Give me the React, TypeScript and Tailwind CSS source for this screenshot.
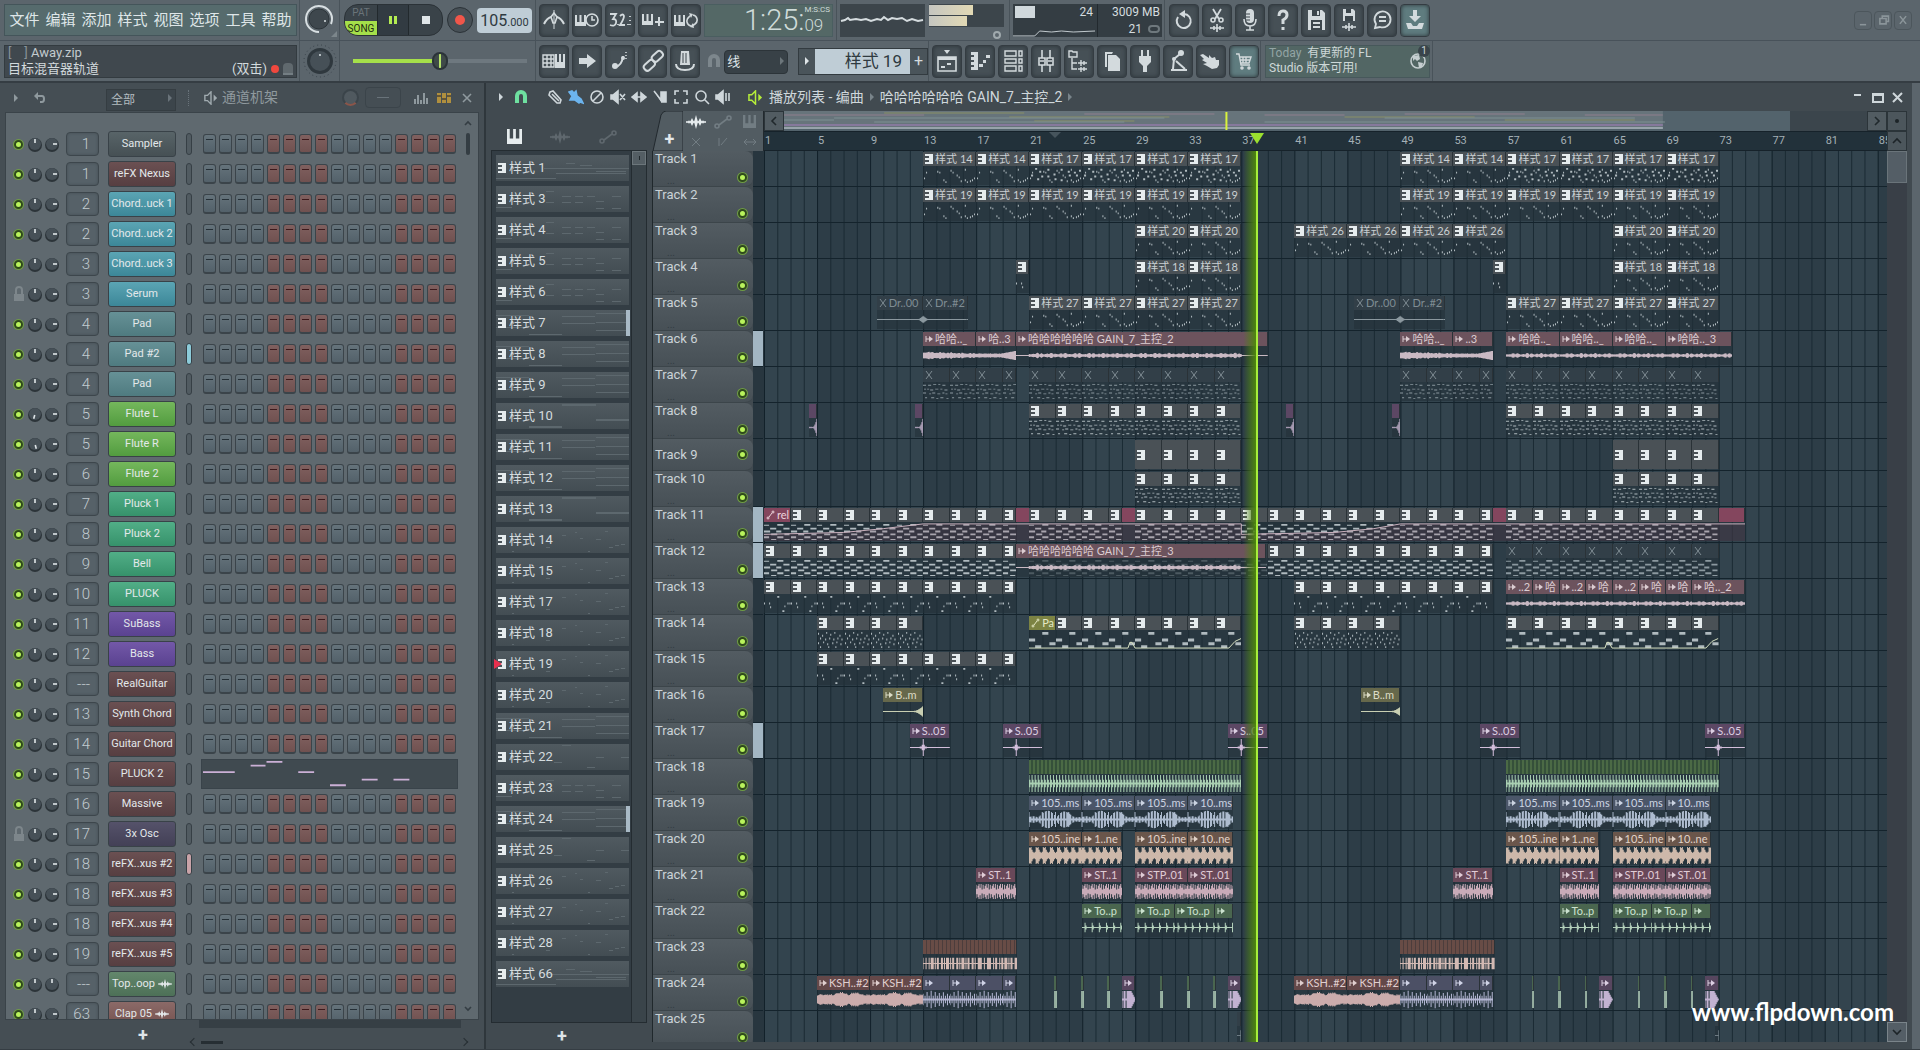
import { ReactNode } from "react";
import clsx from "clsx";

type Tone =
  | "gray" | "muted" | "pink" | "purple" | "red" | "olive" | "lime" | "blue" | "brown"
  | "plum" | "green" | "maroon" | "slate" | "violet" | "stripeGreen" | "stripeRust" | "none";

type ClipIcon = "pattern" | "wave" | "curve" | "cross";

type Clip = {
  at: number;
  len: number;
  tone: Tone;
  icon?: ClipIcon;
  label?: string;
  body?: string;
  tall?: boolean;
};

type Channel = { num: string; name: string; color: string; locked?: boolean; selected?: string; sample?: boolean };

const BARS = 84.7;
const BAR_UNITS = 13;

const toneHeader: Record<Tone, string> = {
  gray: "bg-[#4a5156] text-[#c9cfd2]",
  muted: "bg-[#323f48] text-[#7f8c93]",
  pink: "bg-[#6c535d] text-[#dccdd2]",
  purple: "bg-[#5c4764] text-[#dccfe2]",
  red: "bg-[#84465e] text-[#ecd5dd]",
  olive: "bg-[#66684b] text-[#dcdcc6]",
  lime: "bg-[#7c8343] text-[#e4e8c4]",
  blue: "bg-[#4b5669] text-[#ccd4e2]",
  brown: "bg-[#6a564b] text-[#e2d3c8]",
  plum: "bg-[#694859] text-[#e0ccd6]",
  green: "bg-[#4a664f] text-[#cce2cf]",
  maroon: "bg-[#644849] text-[#e0cfcf]",
  slate: "bg-[#4c5065] text-[#d0d3e6]",
  violet: "bg-[#57465f] text-[#dccfe2]",
  stripeGreen: "bg-[repeating-linear-gradient(90deg,#4b6a45_0_2px,#35503a_2px_4px)]",
  stripeRust: "bg-[repeating-linear-gradient(90deg,#684c46_0_3px,#4c3d3c_3px_4px)]",
  none: "bg-transparent",
};

const toneInk: Record<Tone, string> = {
  gray: "#b0babf",
  muted: "#8b989f",
  pink: "#c9b9c3",
  purple: "#d3bedb",
  red: "#c9a5b6",
  olive: "#c9cfb2",
  lime: "#cfd8a0",
  blue: "#aebccf",
  brown: "#cdb8aa",
  plum: "#c9abb8",
  green: "#b3d0bb",
  maroon: "#cbacac",
  slate: "#b3b6d2",
  violet: "#c3b3d2",
  stripeGreen: "#a9cfb2",
  stripeRust: "#d2b9b3",
  none: "#cfd8a0",
};

// Note cells: [x, y, width, height], tiled over the clip.
type Cell = { period: number; notes: number[][] };

const scatter = [
  [1, 12], [3, 6], [14, 5], [16, 6], [20, 14], [22, 16], [27, 4], [29, 6], [33, 9], [35, 11],
  [37, 15], [41, 3], [41, 14], [43, 16], [46, 15], [48, 14], [50, 12],
].map(([x, y]) => [x, y, 1, 2]);

const cells: Record<string, Cell> = {
  dots: { period: 52, notes: scatter },
  dense: {
    period: 52,
    notes: [
      ...scatter,
      ...[[2, 9], [6, 2], [8, 13], [10, 5], [12, 10], [18, 3], [18, 10], [24, 8], [25, 13], [31, 3], [31, 14], [38, 5], [39, 9], [44, 6], [46, 9], [49, 4]].map(([x, y]) => [x, y, 2, 2]),
    ],
  },
  keys: {
    period: 26,
    notes: [
      [0, 3, 3, 1], [5, 3, 3, 1], [10, 2, 3, 1], [15, 2, 2, 1], [19, 3, 3, 1], [1, 7, 2, 1], [4, 7, 2, 1], [7, 8, 3, 1],
      [12, 7, 3, 1], [17, 7, 2, 1], [21, 8, 3, 1], [0, 11, 3, 1], [6, 12, 2, 1], [9, 11, 3, 1], [14, 12, 3, 1], [19, 11, 2, 1],
      [22, 12, 2, 1], [2, 16, 2, 1], [8, 16, 3, 1], [13, 17, 2, 1], [17, 16, 3, 1], [23, 17, 2, 1],
    ],
  },
  dash: {
    period: 26,
    notes: [
      [0, 3, 5, 1], [13, 2, 6, 2], [6, 6, 6, 2], [19, 6, 6, 2], [0, 9, 6, 2], [12, 9, 5, 2], [7, 12, 6, 2], [20, 12, 5, 2],
      [0, 15, 5, 2], [13, 15, 6, 2], [7, 18, 5, 1], [20, 18, 5, 1],
    ],
  },
  sparse: {
    period: 26,
    notes: [[0, 9, 1, 2], [5, 9, 1, 2], [6, 13, 1, 2], [13, 2, 2, 2], [18, 17, 2, 2], [20, 12, 1, 2], [23, 9, 1, 2], [25, 9, 1, 2]],
  },
  noise: {
    period: 26,
    notes: [
      [1, 3], [5, 5], [9, 2], [13, 4], [17, 2], [22, 5], [3, 8], [8, 9], [12, 8], [16, 9], [20, 8], [24, 9], [1, 13], [6, 12],
      [10, 14], [15, 13], [19, 12], [23, 14], [3, 17], [11, 17], [18, 17],
    ].map(([x, y]) => [x, y, 1, 2]),
  },
  bass: { period: 26, notes: [[0, 9, 6, 3], [6, 16, 6, 3], [13, 2, 6, 3], [20, 13, 6, 3]] },
};

function notesPath(cell: Cell, width: number) {
  let d = "";
  for (let base = 0; base < width; base += cell.period) {
    for (const [x, y, w, h] of cell.notes) {
      if (base + x + w > width) continue;
      d += `M${base + x} ${y}h${w}v${h}h${-w}z`;
    }
  }
  return d;
}

const wobble = (x: number) => Math.abs(Math.sin(x * 1.7) * Math.cos(x * 0.61 + 1));

const waves: Record<string, (x: number, w: number) => number> = {
  flatEnd: (x, w) => (w - x < 5 ? (5 - (w - x)) * 0.8 : 0.5),
  flatStart: (x) => (x < 5 ? (5 - x) * 0.8 : 0.5),
  vox: (x, w) => (x < 13 || w - x < 26 ? 0.5 : 1.2 + wobble(x * 0.4) * 1.6),
  voxFull: (x) => 1 + wobble(x * 0.4) * 1.6,
  fade: (x, w) => 3 + wobble(x * 0.5) * 1.2 - (x / w) * 1.5,
  swell: (x, w) => (x / w < 0.6 ? 1.8 + wobble(x) * 0.5 : 1.8 + ((x / w - 0.6) / 0.4) * 3),
  kick: (x) => (x % 3 === 0 ? 9 : x % 3 === 1 ? 4 : 1),
  shaker: (x) => (x % 13 === 0 ? 8 : x % 3 === 0 ? 1 : 2 + wobble(x * 0.1 + 1) * 8),
  strum: (x) => [9, 8, 9, 6, 4, 3, 4][x % 7],
  stomp: (x) => [7, 3, 6, 8, 4, 8, 2][x % 7],
  ticks: (x) => (x % 7 === 3 ? 5 : x % 7 === 4 ? 2 : 0.5),
  clap: (x) => (x % 3 === 0 ? 6 : wobble(x) > 0.5 ? 6 : 0.5),
  ksh: (x) => 4 + wobble(x * 0.12) * 3 + wobble(x) * 1.5,
  hat: (x) => (x % 4 === 0 ? 6 + wobble(x) * 4 : x % 4 === 2 ? 4 : 1),
  riser: (x, w) => (x / w < 0.75 ? 0.5 : 0.5 + ((x / w - 0.75) / 0.25) ** 2 * 5),
  hit: (x, w) => {
    const away = Math.abs(x - Math.round(w * 0.33));
    return away === 0 ? 9 : away === 1 ? 3 : away < 4 ? 1 : 0.5;
  },
  tail: (x, w) => (x / w < 0.4 ? 0.7 : ((x / w - 0.4) / 0.6) ** 2 * 9),
  stack: (x) => (x < 7 ? (x % 3 === 1 ? 1 : 9) : x < 10 ? 9 : 9 - (x - 9) * 2),
  sliver: () => 9,
};

function wavePath(amp: (x: number, w: number) => number, width: number) {
  let d = "";
  for (let x = 0; x <= width; x += 1) {
    const h = Math.max(amp(x, width), 0.5);
    d += `M${x} ${10 - h}V${10 + h}`;
  }
  return d;
}

function twice(list: Clip[], shift = 36): Clip[] {
  return [...list, ...list.map((clip) => ({ ...clip, at: clip.at + shift }))];
}

function patterns(from: number, to: number, step: number, body: string, label?: string, tone: Tone = "gray"): Clip[] {
  const list: Clip[] = [];
  for (let at = from; at < to; at += step) {
    list.push({ at, len: Math.min(step, to - at), tone, icon: tone === "muted" ? "cross" : "pattern", label, body });
  }
  return list;
}

const wav = (at: number, len: number, tone: Tone, label: string, body: string): Clip => ({ at, len, tone, icon: "wave", label, body });

const slivers = [22.9, 24.9, 26.9, 30.9, 32.9, 34.9].map((at): Clip => ({ at, len: 0.2, tone: "green", body: "sliver" }));

const lanes: Clip[][] = [
  twice([...patterns(13, 21, 4, "dots", "样式 14"), ...patterns(21, 37, 4, "dense", "样式 17")]),
  twice(patterns(13, 37, 4, "dots", "样式 19")),
  [...twice(patterns(29, 37, 4, "dots", "样式 20")), ...patterns(41, 57, 4, "dots", "样式 26")],
  twice([...patterns(20, 21, 1, "sparse"), ...patterns(29, 37, 4, "dots", "样式 18")]),
  twice([
    { at: 9.5, len: 3.5, tone: "muted", icon: "cross", label: "Dr..00", body: "flatEnd" },
    { at: 13, len: 3.4, tone: "muted", icon: "cross", label: "Dr..#2", body: "flatStart" },
    ...patterns(21, 37, 4, "dots", "样式 27"),
  ]),
  [
    wav(13, 4, "pink", "哈哈.._", "fade"),
    wav(17, 3, "pink", "哈..3", "swell"),
    wav(20, 19, "pink", "哈哈哈哈哈哈 GAIN_7_主控_2", "vox"),
    wav(49, 4, "pink", "哈哈.._", "fade"),
    wav(53, 3, "pink", "..3", "swell"),
    wav(57, 4, "pink", "哈哈.._", "voxFull"),
    wav(61, 4, "pink", "哈哈.._", "voxFull"),
    wav(65, 4, "pink", "哈哈.._", "voxFull"),
    wav(69, 5, "pink", "哈哈.._3", "voxFull"),
  ],
  twice([...patterns(13, 20, 2, "keys", "", "muted"), ...patterns(21, 37, 2, "keys", "", "muted")]),
  twice([
    { at: 4.4, len: 0.6, tone: "purple", body: "tail" },
    { at: 12.4, len: 0.6, tone: "purple", body: "tail" },
    ...patterns(21, 37, 2, "keys"),
  ]),
  twice(patterns(29, 37, 2, "").map((clip) => ({ ...clip, tall: true }))),
  twice(patterns(29, 37, 2, "keys")),
  [
    { at: 1, len: 74, tone: "red" },
    ...patterns(1, 20, 2, "dash"),
    ...patterns(21, 28, 2, "dash"),
    ...patterns(29, 37, 2, "dash"),
    ...patterns(37, 56, 2, "dash"),
    ...patterns(57, 73, 2, "dash"),
    { at: 1, len: 74, tone: "none", body: "sweep" },
    { at: 1, len: 2, tone: "red", icon: "curve", label: "rel" },
  ],
  [
    ...patterns(1, 20, 2, "dash"),
    ...patterns(21, 39, 2, "dash", "", "muted"),
    ...patterns(39, 56, 2, "dash"),
    ...patterns(57, 73, 2, "dash", "", "muted"),
    wav(20, 18.9, "pink", "哈哈哈哈哈哈 GAIN_7_主控_3", "vox"),
  ],
  [
    ...patterns(1, 20, 2, "sparse"),
    ...patterns(41, 56, 2, "sparse"),
    ...["..2", "哈", "..2", "哈", "..2", "哈", "哈"].map((label, i) => wav(57 + i * 2, 2, "pink", label, "voxFull")),
    wav(71, 4, "pink", "哈.._2", "voxFull"),
  ],
  [
    ...twice([...patterns(5, 13, 2, "noise"), ...patterns(21, 37, 2, "bass")]),
    ...twice([{ at: 21, len: 16, tone: "none", body: "panline" }]),
    { at: 21, len: 2, tone: "lime", icon: "curve", label: "Pa" },
  ],
  patterns(5, 20, 2, "sparse"),
  twice([wav(10, 3, "olive", "B..m", "riser")]),
  [12, 19, 36, 55, 72].map((at) => wav(at, 3, "purple", "S..05", "hit")),
  twice([{ at: 21, len: 16, tone: "stripeGreen", body: "kick" }]),
  twice([
    wav(21, 4, "blue", "105..ms", "shaker"),
    wav(25, 4, "blue", "105..ms", "shaker"),
    wav(29, 4, "blue", "105..ms", "shaker"),
    wav(33, 3.4, "blue", "10..ms", "shaker"),
  ]),
  twice([
    wav(21, 4, "brown", "105..ine", "strum"),
    wav(25, 3, "brown", "1..ne", "strum"),
    wav(29, 4, "brown", "105..ine", "strum"),
    wav(33, 3.4, "brown", "10..ne", "strum"),
  ]),
  twice([
    wav(17, 3, "plum", "ST..1", "stomp"),
    wav(25, 3, "plum", "ST..1", "stomp"),
    wav(29, 4, "plum", "STP..01", "stomp"),
    wav(33, 3.4, "plum", "ST..01", "stomp"),
  ]),
  twice([
    wav(25, 3, "green", "To..p", "ticks"),
    wav(29, 3, "green", "To..p", "ticks"),
    wav(32, 3, "green", "To..p", "ticks"),
    wav(35, 1.4, "green", "", "ticks"),
  ]),
  twice([{ at: 13, len: 7.1, tone: "stripeRust", body: "clap" }]),
  twice([
    wav(5, 4, "maroon", "KSH..#2", "ksh"),
    wav(9, 4, "maroon", "KSH..#2", "ksh"),
    wav(13, 2, "slate", "", "hat"),
    wav(15, 2, "slate", "", "hat"),
    wav(17, 2, "slate", "", "hat"),
    wav(19, 1, "slate", "", "hat"),
    ...slivers,
    wav(28, 1, "violet", "", "stack"),
    wav(36, 1, "violet", "", "stack"),
  ]),
  twice([{ at: 36.7, len: 0.3, tone: "muted", body: "riser" }]),
];

const litTracks = [6, 11, 12, 17];

const maroon = "from-[#6b5052] to-[#563e41]";
const cyan = "from-[#5ba5b4] to-[#3c8798]";
const teal = "from-[#669196] to-[#4f7b80]";
const lime = "from-[#74b75c] to-[#529c3f]";
const jade = "from-[#51ae87] to-[#36926b]";
const grape = "from-[#7358a8] to-[#5a4290]";

const channels: Channel[] = [
  { num: "1", name: "Sampler", color: "from-[#586468] to-[#465054]" },
  { num: "1", name: "reFX Nexus", color: maroon },
  { num: "2", name: "Chord..uck 1", color: cyan },
  { num: "2", name: "Chord..uck 2", color: cyan },
  { num: "3", name: "Chord..uck 3", color: cyan },
  { num: "3", name: "Serum", color: cyan, locked: true },
  { num: "4", name: "Pad", color: teal },
  { num: "4", name: "Pad #2", color: teal, selected: "bg-[#8ccbd9]" },
  { num: "4", name: "Pad", color: teal },
  { num: "5", name: "Flute L", color: lime },
  { num: "5", name: "Flute R", color: lime },
  { num: "6", name: "Flute 2", color: lime },
  { num: "7", name: "Pluck 1", color: jade },
  { num: "8", name: "Pluck 2", color: jade },
  { num: "9", name: "Bell", color: jade },
  { num: "10", name: "PLUCK", color: jade },
  { num: "11", name: "SuBass", color: grape },
  { num: "12", name: "Bass", color: grape },
  { num: "---", name: "RealGuitar", color: maroon },
  { num: "13", name: "Synth Chord", color: maroon },
  { num: "14", name: "Guitar Chord", color: maroon },
  { num: "15", name: "PLUCK 2", color: maroon },
  { num: "16", name: "Massive", color: maroon },
  { num: "17", name: "3x Osc", color: "from-[#55526a] to-[#434056]", locked: true },
  { num: "18", name: "reFX..xus #2", color: maroon, selected: "bg-[#c9a3a8]" },
  { num: "18", name: "reFX..xus #3", color: maroon },
  { num: "18", name: "reFX..xus #4", color: maroon },
  { num: "19", name: "reFX..xus #5", color: maroon },
  { num: "---", name: "Top..oop", color: "from-[#63876c] to-[#4d7057]", sample: true },
  { num: "63", name: "Clap 05", color: "from-[#8b6a68] to-[#75524f]", sample: true },
];

const pickerItems = [1, 3, 4, 5, 6, 7, 8, 9, 10, 11, 12, 13, 14, 15, 17, 18, 19, 20, 21, 22, 23, 24, 25, 26, 27, 28, 66];
const menus = ["文件", "编辑", "添加", "样式", "视图", "选项", "工具", "帮助"];

function Icon({ children, className = "size-6", box = "0 0 24 24" }: { children: ReactNode; className?: string; box?: string }) {
  return (
    <svg viewBox={box} className={clsx("shrink-0", className)} fill="none" stroke="currentColor" strokeWidth="1.6" aria-hidden="true">
      {children}
    </svg>
  );
}

const pianoPath = "M0 0h2v7h2.5V0h2v7H9V0h2v11H0z";
const solid = { fill: "currentColor", stroke: "none" };

const icons = {
  metronome: (
    <Icon>
      <path d="M12 2v19" strokeWidth="1" />
      <path d="M12 5l-3 4 2 6h2l2-6z" />
      <path d="M2 16q3-6 7-7M22 16q-3-6-7-7" strokeWidth="2" />
    </Icon>
  ),
  pianoClock: (
    <Icon>
      <path d={pianoPath} transform="translate(0 7)" {...solid} />
      <circle cx="17" cy="12" r="6" />
      <path d="M17 8v4h3" />
    </Icon>
  ),
  countdown: (
    <Icon>
      <path d="M2 6h6l-3 5q4 0 3 4t-6 2M12 8q3-3 4 0 0 3-4 9h5M10 16v1M20 16v1M22 8v1M22 12v1M22 16v1" strokeWidth="1.8" />
    </Icon>
  ),
  pianoPlus: (
    <Icon>
      <path d={pianoPath} transform="translate(1 6)" {...solid} />
      <path d="M18 9v9M14 14h9" strokeWidth="2" />
    </Icon>
  ),
  pianoLoop: (
    <Icon>
      <path d={pianoPath} transform="translate(0 7)" {...solid} />
      <path d="M17 18a5 5 0 0 1-2-9l2-2M19 7a5 5 0 0 1 2 9l-3 2" />
      <path d="M15 5l4 1-2 4zM20 20l-4-1 3-4z" {...solid} />
    </Icon>
  ),
  typing: (
    <Icon>
      <path d="M1 6h11v12H1zM1 10h11M1 14h11M5 6v12M9 6v12" strokeWidth="1.4" />
      <path d="M13 5h2v8h2V5h2v8h2V5h2v14H13z" {...solid} />
    </Icon>
  ),
  arrow: (
    <Icon>
      <path d="M4 9h8V5l9 7-9 7v-4H4z" {...solid} />
    </Icon>
  ),
  slide: (
    <Icon>
      <path d="M7 18q7-1 8-11" strokeWidth="2" />
      <circle cx="7" cy="17" r="3" {...solid} />
      <circle cx="15" cy="9" r="2" {...solid} />
      <path d="M18 3v9" strokeDasharray="1 2" />
    </Icon>
  ),
  link: (
    <Icon>
      <rect x="10" y="4" width="12" height="7" rx="3" transform="rotate(-42 16 7)" strokeWidth="2" />
      <rect x="2" y="13" width="12" height="7" rx="3" transform="rotate(-42 8 16)" strokeWidth="2" />
    </Icon>
  ),
  knobPost: (
    <Icon>
      <path d="M8 2h8l1 14H7z" {...solid} />
      <path d="M3 15q0 6 9 6t9-6" strokeWidth="2" />
      <path d="M10 4v10M13 4v10" stroke="#3c464c" strokeWidth="1" />
    </Icon>
  ),
  undo: (
    <Icon>
      <path d="M12 6a7 7 0 1 1-6 3" strokeWidth="2" />
      <path d="M7 6l6-4v8z" {...solid} />
    </Icon>
  ),
  cut: (
    <Icon>
      <path d="M8 1l6 10M16 1l-6 10" strokeWidth="1.8" />
      <circle cx="8" cy="12" r="2" />
      <circle cx="16" cy="12" r="2" />
      <path d="M5 20h14M9 18v4M12 16v8M15 18v4" />
    </Icon>
  ),
  mic: (
    <Icon>
      <rect x="8" y="1" width="8" height="14" rx="4" {...solid} />
      <path d="M6 11q0 7 6 7t6-7M12 18v4M8 22h8" />
      <path d="M8 6h4M8 9h4M8 12h4" stroke="#3c464c" strokeWidth="1" />
    </Icon>
  ),
  help: (
    <Icon>
      <path d="M8 8q0-5 4-5t4 4q0 3-4 5v4M12 19v3" strokeWidth="3" />
    </Icon>
  ),
  save: (
    <Icon>
      <path d="M4 2h14l3 3v17H4z" {...solid} />
      <path d="M8 2h8v6H8zM7 12h11v10H7z" fill="#3c464c" stroke="none" />
      <path d="M13 3h2v4h-2zM9 14h7v2H9zM9 18h7v2H9z" {...solid} />
    </Icon>
  ),
  saveWave: (
    <Icon>
      <path d="M6 1h10l2 2v10H6z" {...solid} />
      <path d="M9 1h5v4H9zM8 8h8v5H8z" fill="#3c464c" stroke="none" />
      <path d="M5 19h14M9 17v4M12 15v8M15 17v4" />
    </Icon>
  ),
  chat: (
    <Icon>
      <path d="M5 20l1-4a8 8 0 1 1 4 3z" strokeWidth="1.8" />
      <path d="M9 9h7M9 13h7" strokeWidth="1.8" />
    </Icon>
  ),
  download: (
    <Icon>
      <path d="M10 2h4v6h4l-6 6-6-6h4zM3 15h5l2 3h4l2-3h5l-2 6H5z" {...solid} />
    </Icon>
  ),
  playlist: (
    <Icon>
      <path d="M9 1h6l-3 4z" {...solid} />
      <path d="M3 8h18v14H3z" />
      <path d="M3 8h18v3H3zM6 17h4v2H6zM12 14h4v2h-4z" {...solid} />
    </Icon>
  ),
  pianoRoll: (
    <Icon>
      <path d="M3 3h7v18H3v-3h3v-2H3v-3h3v-2H3V8h3V6H3zM11 15h4v3h-4zM15 11h3v3h-3zM18 6h4v3h-4z" {...solid} />
    </Icon>
  ),
  rack: (
    <Icon>
      <path d="M4 2h11v5H4zM4 10h11v4H4zM4 17h11v5H4zM18 2h3v5h-3zM18 10h3v4h-3zM18 17h3v5h-3z" strokeWidth="1.4" />
    </Icon>
  ),
  mixer: (
    <Icon>
      <path d="M8 1v22M16 1v22" />
      <path d="M5 9h6v7H5zM13 9h6v7h-6z" fill="#3c464c" />
      <path d="M6 12h4M14 12h4" />
    </Icon>
  ),
  browser: (
    <Icon>
      <path d="M2 2h3l1 1h4v5H2zM5 9v11h5M5 14h5" strokeWidth="1.4" />
      <path d="M11 14h9M11 20h9M14 11v6M17 12v4M14 18v5M17 18v4" strokeWidth="1.4" />
    </Icon>
  ),
  copy: (
    <Icon>
      <path d="M5 3h8l-1 2H7v13H5z" {...solid} />
      <path d="M8 6h8l4 4v12H8z" {...solid} />
    </Icon>
  ),
  plug: (
    <Icon>
      <path d="M8 1h2v6h4V1h2v6h2v6l-4 4v6h-4v-6l-4-4V7h2z" {...solid} />
    </Icon>
  ),
  robot: (
    <Icon>
      <path d="M7 20L8 10l6-5M5 21h16M10 12l9 8" strokeWidth="2" />
      <circle cx="15" cy="4" r="3" {...solid} />
      <circle cx="8" cy="10" r="2" {...solid} />
    </Icon>
  ),
  hand: (
    <Icon>
      <path d="M4 5l6 4V6l3 3 3-1 1 3h3v5l-2 3-5 1-5-3-4-2 4-1-5-3 2-1-4-4z" {...solid} />
    </Icon>
  ),
  cart: (
    <Icon>
      <path d="M4 5h3l2 11h9M7 8h12l-2 6H9M11 8v6M14 8v6M8 11h10" strokeWidth="1.4" />
      <circle cx="10" cy="19" r="1" />
      <circle cx="17" cy="19" r="1" />
    </Icon>
  ),
};

function WaveGlyph({ className }: { className?: string }) {
  return (
    <Icon className={className} box="0 0 20 14">
      <path d="M0 7h20" />
      <path d="M2 7l1-2 1 2 2-4 2 4 2-7 2 7 2-4 2 4 1-2 1 2-1 2-1-2-2 4-2-4-2 7-2-7-2 4-2-4-1 2z" {...solid} />
    </Icon>
  );
}

function CurveGlyph({ className }: { className?: string }) {
  return (
    <Icon className={className} box="0 0 20 14">
      <circle cx="4" cy="11" r="2" />
      <circle cx="16" cy="3" r="2" />
      <path d="M6 10l8-6" />
    </Icon>
  );
}

function PianoGlyph({ className }: { className?: string }) {
  return (
    <Icon className={className} box="0 0 11 11">
      <path d={pianoPath} {...solid} />
    </Icon>
  );
}

function PatternGlyph() {
  return (
    <svg viewBox="0 0 8 10" className="h-[10px] w-2 shrink-0" fill="#e6ecee" aria-hidden="true">
      <path d="M0 0h8v10H0V8h4V6H0V4h4V2H0z" />
    </svg>
  );
}

function ToolButton({ label, lit, children }: { label: string; lit?: boolean; children: ReactNode }) {
  return (
    <button
      type="button"
      aria-label={label}
      className={clsx(
        "flex h-[33px] w-[30px] items-center justify-center rounded border border-[#343c42] text-[#d3dadd] shadow-[inset_0_0_4px_#2b3338]",
        lit ? "bg-[#5f7c7f]" : "bg-[#465056]",
      )}
    >
      {children}
    </button>
  );
}

function Section({ className, children }: { className?: string; children?: ReactNode }) {
  return <div className={clsx("flex items-center border-r border-[#49535a]", className)}>{children}</div>;
}

function Led() {
  return <span className="size-[9px] shrink-0 rounded-full border-2 border-[#2f4a1c] bg-[#b9f35c] ring-1 ring-[#6f9c45]" />;
}

function Knob({ turn }: { turn: number }) {
  return (
    <svg viewBox="0 0 14 16" className="h-4 w-[14px] shrink-0" aria-hidden="true">
      <circle cx="7" cy="9" r="7" fill="#2c3439" />
      <circle cx="7" cy="8" r="6" fill="#465057" />
      <path d="M7 3v4" stroke="#dfe5e8" strokeWidth="1.6" transform={`rotate(${turn} 7 8)`} />
    </svg>
  );
}

function TopBar() {
  return (
    <header className="shrink-0 border-b-2 border-[#353d43] bg-[#5b656c] text-[#d3dadd]">
      <div className="flex h-[41px] border-b border-[#48525a]">
        <Section className="w-[300px] shrink-0 pl-1">
          <nav className="flex h-8 w-[293px] items-center justify-center gap-[6px] border border-[#44555a] bg-[#566b6d]">
            {menus.map((menu) => (
              <button key={menu} type="button" className="text-[15px] text-[#dfe6e8]">
                {menu}
              </button>
            ))}
          </nav>
        </Section>
        <Section className="w-10 shrink-0 justify-center">
          <svg viewBox="0 0 34 34" className="size-[34px]" aria-hidden="true">
            <circle cx="16" cy="16" r="10" fill="#3e474d" stroke="#2c3439" />
            <path d="M16 29a13 13 0 1 1 12-8" fill="none" stroke="#d8dfe2" strokeWidth="2" />
            <circle cx="22" cy="18" r="1" fill="#d8dfe2" />
            <path d="M34 28v6h-6z" fill="#7c868b" />
          </svg>
        </Section>
        <Section className="w-[196px] shrink-0 gap-1 pl-1">
          <div className="flex h-8 w-[99px] overflow-hidden rounded-[14px] border border-[#2b3237] bg-[#3a4349]">
            <div className="flex w-8 flex-col">
              <button type="button" className="h-4 text-[10px] leading-4 text-[#6a7479]">PAT</button>
              <button type="button" className="h-4 bg-[#a5e04a] text-[10px] leading-4 text-[#1e2a12]">SONG</button>
            </div>
            <button type="button" aria-label="Pause" className="flex w-8 items-center justify-center gap-[2px] border-x border-[#22292d] bg-[#323b42]">
              <span className="h-2 w-[3px] bg-[#b4ec52]" />
              <span className="h-2 w-[3px] bg-[#b4ec52]" />
            </button>
            <button type="button" aria-label="Stop" className="flex flex-1 items-center justify-center">
              <span className="size-2 bg-[#dfe5e8]" />
            </button>
          </div>
          <button type="button" aria-label="Record" className="flex size-[26px] items-center justify-center rounded-full border border-[#2b3237] bg-[#475056]">
            <span className="size-[10px] rounded-full bg-[#f0564a]" />
          </button>
          <output aria-label="Tempo" className="flex h-[25px] w-[55px] items-baseline justify-center rounded bg-[#bfcdd6] text-[#2f3a40]">
            <span className="text-[16px] leading-[25px]">105</span>
            <span className="text-[11px]">.000</span>
          </output>
        </Section>
        <Section className="w-[301px] shrink-0 gap-[3px] pl-[3px]">
          <ToolButton label="Metronome">{icons.metronome}</ToolButton>
          <ToolButton label="Wait for input">{icons.pianoClock}</ToolButton>
          <ToolButton label="Countdown">{icons.countdown}</ToolButton>
          <ToolButton label="Overdub">{icons.pianoPlus}</ToolButton>
          <ToolButton label="Loop record">{icons.pianoLoop}</ToolButton>
          <div className="flex h-[33px] w-[129px] justify-end border border-[#4a5e60] bg-[#546866] pr-[2px] font-light text-[#cfdbd9]">
            <span className="text-[29px] leading-[31px]">1:25:</span>
            <span className="flex flex-col">
              <span className="text-[8px] leading-[10px] font-normal">M:S:CS</span>
              <span className="text-[17px] leading-5">09</span>
            </span>
          </div>
        </Section>
        <Section className="w-[173px] shrink-0 items-start gap-1 pt-1 pl-[3px]">
          <svg viewBox="0 0 85 33" className="h-[33px] w-[85px] bg-[#3c454b]" aria-hidden="true">
            <path
              d="M1 17l4-1 3-2 2 2 6-1 5 1 5-1 5 2 6-2 4 1 3-3 4 3 4-2 5 1 5-1 5 3 5-2 6 2 5-1"
              fill="none" stroke="#d5dcdf" strokeWidth="2"
            />
          </svg>
          <div className="flex flex-col items-end gap-1">
            <div className="flex h-[23px] w-[75px] flex-col gap-px bg-[#3c454b] py-px">
              <span className="h-[10px] w-11 bg-linear-to-r from-[#c5c6c0] to-[#e2d9b4]" />
              <span className="h-[10px] w-[38px] bg-linear-to-r from-[#c5c6c0] to-[#e2d9b4]" />
            </div>
            <span className="mr-[3px] size-2 rounded-full border-2 border-[#a0a9ad]" />
          </div>
        </Section>
        <Section className="w-[155px] shrink-0 pl-[3px]">
          <div className="flex h-[33px] w-[149px] bg-[#343d43] text-xs text-[#d5dcdf]">
            <div className="relative w-[85px] border-r border-[#22292e]">
              <span className="absolute top-[2px] left-[2px] h-3 w-5 bg-[#d0d8dc]" />
              <span className="absolute top-0 right-1 leading-[17px]">24</span>
              <svg viewBox="0 0 85 10" className="absolute bottom-0 h-[10px] w-full" aria-hidden="true">
                <path d="M0 9h22l5-5 12 1 10-1 12 1 22-1" fill="none" stroke="#c3cbcf" />
              </svg>
            </div>
            <div className="flex flex-1 flex-col items-end pr-[2px]">
              <span className="leading-[17px]">3009 MB</span>
              <span className="flex items-center gap-[6px] leading-4">
                21 <span className="h-2 w-3 rounded-full border-2 border-[#6e787d]" />
              </span>
            </div>
          </div>
        </Section>
        <div className="flex flex-1 items-center gap-[3px] pl-[4px]">
          <ToolButton label="Undo">{icons.undo}</ToolButton>
          <ToolButton label="Cut">{icons.cut}</ToolButton>
          <ToolButton label="Record audio">{icons.mic}</ToolButton>
          <ToolButton label="Help">{icons.help}</ToolButton>
          <ToolButton label="Save">{icons.save}</ToolButton>
          <ToolButton label="Render">{icons.saveWave}</ToolButton>
          <ToolButton label="Feedback">{icons.chat}</ToolButton>
          <ToolButton label="Download" lit>{icons.download}</ToolButton>
        </div>
        <div className="flex items-center gap-[2px] pr-2 text-[#8b959a]">
          {["M5 15h8", "M5 7h8v7H5zM8 7V4h8v7h-3", "M5 4l8 10M13 4l-8 10"].map((d) => (
            <button key={d} type="button" aria-label="Window control" className="flex h-[19px] w-[18px] items-center justify-center rounded-sm border border-[#4c565c]">
              <Icon className="size-[14px]" box="0 0 18 18">
                <path d={d} strokeWidth="2" />
              </Icon>
            </button>
          ))}
        </div>
      </div>

      <div className="flex h-10">
        <Section className="w-[300px] shrink-0 pl-1">
          <div className="flex h-[33px] w-[293px] flex-col justify-center border border-[#333b40] bg-[#40484e] px-[3px] text-[13px]">
            <span className="leading-4 text-[#c3cbcf]">
              <span className="text-[#88939a]">[&nbsp;&nbsp;&nbsp;&nbsp;]</span> Away.zip
            </span>
            <span className="flex items-center leading-4">
              <span className="flex-1">目标混音器轨道</span>
              (双击)
              <span className="mx-1 size-2 rounded-full bg-[#f0483e]" />
              <span className="h-3 w-[10px] rounded-t border-b-2 border-[#747e83] bg-[#60696e]" />
            </span>
          </div>
        </Section>
        <Section className="w-10 shrink-0 justify-center">
          <svg viewBox="0 0 34 34" className="size-[34px]" aria-hidden="true">
            <circle cx="17" cy="17" r="16" fill="none" stroke="#39424a" strokeDasharray="1 3" />
            <circle cx="17" cy="17" r="13" fill="#2f383e" />
            <circle cx="17" cy="17" r="10" fill="#465057" />
            <circle cx="17" cy="11" r="1" fill="#d8dfe2" />
          </svg>
        </Section>
        <Section className="w-[196px] shrink-0 pr-2 pl-[13px]">
          <input
            type="range"
            aria-label="Main pitch"
            defaultValue={50}
            className="h-5 w-full appearance-none bg-[linear-gradient(90deg,#a5e04a_50%,#6e787f_50%)] bg-[length:100%_4px] bg-center bg-no-repeat [&::-webkit-slider-thumb]:h-[18px] [&::-webkit-slider-thumb]:w-4 [&::-webkit-slider-thumb]:appearance-none [&::-webkit-slider-thumb]:rounded-full [&::-webkit-slider-thumb]:border-2 [&::-webkit-slider-thumb]:border-[#2b3338] [&::-webkit-slider-thumb]:bg-[linear-gradient(90deg,#3f4a48_5px,#b5e26a_5px,#b5e26a_7px,#3f4a48_7px)]"
          />
        </Section>
        <Section className="w-[393px] shrink-0 gap-[3px] pl-[3px]">
          <ToolButton label="Typing keyboard">{icons.typing}</ToolButton>
          <ToolButton label="Auto scroll">{icons.arrow}</ToolButton>
          <ToolButton label="Slide">{icons.slide}</ToolButton>
          <ToolButton label="Link controllers">{icons.link}</ToolButton>
          <ToolButton label="Multilink">{icons.knobPost}</ToolButton>
          <Icon className="ml-1 size-[14px] text-[#7d878d]" box="0 0 14 14">
            <path d="M3 13V6a4 4 0 0 1 8 0v7" strokeWidth="4" />
          </Icon>
          <div className="relative h-6 w-[64px]">
            <select aria-label="Snap" className="size-full appearance-none rounded-sm border border-[#2c3439] bg-[#384147] pl-[2px] text-[13px] text-[#dfe5e8]">
              <option>线</option>
            </select>
            <span className="pointer-events-none absolute top-2 right-1 border-y-4 border-l-4 border-y-transparent border-l-[#6c767b]" />
          </div>
          <div className="ml-[7px] flex h-[27px] items-stretch border border-[#333b40]">
            <button type="button" aria-label="Previous pattern" className="flex w-4 items-center justify-center bg-[#4a545a]">
              <span className="border-y-4 border-l-4 border-y-transparent border-l-[#dfe5e8]" />
            </button>
            <button type="button" className="w-[95px] bg-[#bfcdd6] pr-2 text-right text-[17px] leading-6 text-[#2f3a40]">
              样式 19
            </button>
            <button type="button" aria-label="New pattern" className="w-[17px] bg-[#4a545a] text-base leading-6">
              +
            </button>
          </div>
        </Section>
        <Section className="w-[332px] shrink-0 gap-[3px] pl-[3px]">
          <ToolButton label="Playlist">{icons.playlist}</ToolButton>
          <ToolButton label="Piano roll">{icons.pianoRoll}</ToolButton>
          <ToolButton label="Channel rack">{icons.rack}</ToolButton>
          <ToolButton label="Mixer">{icons.mixer}</ToolButton>
          <ToolButton label="Browser">{icons.browser}</ToolButton>
          <ToolButton label="Project picker">{icons.copy}</ToolButton>
          <ToolButton label="Plugin picker">{icons.plug}</ToolButton>
          <ToolButton label="Tempo tapper">{icons.robot}</ToolButton>
          <ToolButton label="Touch controllers">{icons.hand}</ToolButton>
          <ToolButton label="Shop" lit>{icons.cart}</ToolButton>
        </Section>
        <Section className="w-[172px] shrink-0 pl-1">
          <div className="flex h-[33px] w-[165px] items-center border border-[#47585b] bg-[#526664] px-[3px] text-xs leading-[15px] text-[#ced8d8]">
            <p className="flex-1">
              <span className="text-[#93a5a5]">Today</span>&nbsp; 有更新的 FL
              <br />
              Studio 版本可用!
            </p>
            <div className="relative">
              <Icon className="size-4 text-[#c5ced0]" box="0 0 16 16">
                <circle cx="8" cy="8" r="7" />
                <path d="M3 3l6-1 1 4-3 2-2-2-2 2zM8 9l5 1-1 4-3 1z" {...solid} />
              </Icon>
              <span className="absolute -top-2 -right-1 size-3 rounded-full bg-[#39444a] text-center text-[10px] leading-3">1</span>
            </div>
          </div>
        </Section>
      </div>
    </header>
  );
}

function ChannelRow({ channel, turn }: { channel: Channel; turn: number }) {
  return (
    <li className="flex h-[30px] items-center">
      <div className="flex w-[25px] justify-center">
        {channel.locked ? (
          <svg viewBox="0 0 12 16" className="h-4 w-3" aria-hidden="true">
            <path d="M3 8V4a3 3 0 0 1 6 0v4" fill="none" stroke="#7d868b" strokeWidth="2" />
            <path d="M1 8h10v7H1z" fill="#7d868b" />
          </svg>
        ) : (
          <Led />
        )}
      </div>
      <div className="ml-[-3px] flex gap-[3px]">
        <Knob turn={turn} />
        <Knob turn={channel.num === "---" && channel.sample ? 0 : 90} />
      </div>
      <span className="ml-[7px] flex h-6 w-[33px] items-center justify-end rounded border border-[#3d464c] bg-[#566168] pr-2 text-[15px] font-light text-[#c3ccd1] shadow-[inset_0_0_3px_#434d53]">
        {channel.num}
      </span>
      <button
        type="button"
        className={clsx("ml-[9px] flex h-[26px] w-[68px] items-center justify-center gap-[3px] rounded-[3px] border border-[#394248] bg-linear-to-b text-[11px] whitespace-nowrap text-[#e3e8ea]", channel.color)}
      >
        {channel.name}
        {channel.sample && <WaveGlyph className="h-[10px] w-[14px]" />}
      </button>
      <span className={clsx("ml-[10px] h-[22px] w-[6px] rounded-sm border border-[#363f45]", channel.selected ?? "bg-[#515b61]")} />
      {channel.name === "PLUCK 2" ? (
        <svg viewBox="0 0 257 30" className="ml-[9px] h-[30px] w-[257px] border border-[#39434a] bg-[#404a50]" preserveAspectRatio="none" aria-hidden="true">
          <path
            d="M1 12h32v2H1zM49 5h15v2H49zM65 1h16v2H65zM97 12h16v2H97zM129 26h16v2h-16zM161 20h16v2h-16zM193 20h16v2h-16z"
            fill="#cbb0d6"
          />
        </svg>
      ) : (
        <div className="ml-[11px] flex gap-[3px]">
          {Array.from({ length: 16 }, (_, i) => (
            <button
              key={i}
              type="button"
              aria-label={`Step ${i + 1}`}
              className={clsx(
                "flex h-5 w-[13px] justify-center rounded-[3px] border border-b-2 border-[#3b444a] bg-linear-to-b pt-1",
                Math.floor(i / 4) % 2 ? "from-[#80605f] to-[#705150]" : "from-[#65737b] to-[#53616a]",
              )}
            >
              <span className={clsx("h-px w-[7px]", Math.floor(i / 4) % 2 ? "bg-[#3c1a1c]" : "bg-[#252f36]")} />
            </button>
          ))}
        </div>
      )}
    </li>
  );
}

function ChannelRack() {
  return (
    <section className="flex w-[486px] shrink-0 flex-col border-r-2 border-[#2f373c] bg-[#454e54] px-[5px]">
      <div className="flex h-[29px] shrink-0 items-center text-[#8f999e]">
        <span className="ml-[9px] border-y-4 border-l-4 border-y-transparent border-l-[#8f999e]" />
        <Icon className="ml-4 size-3" box="0 0 12 12">
          <path d="M2 4h6a2 3 0 0 1 0 6H6" strokeWidth="2" />
          <path d="M0 4l4-4v8z" {...solid} />
        </Icon>
        <div className="relative ml-[60px] h-[22px] w-[70px]">
          <select aria-label="Channel filter" className="size-full appearance-none border border-[#353d42] bg-[#3c454b] pl-1 text-xs text-[#b3bcc0]">
            <option>全部</option>
          </select>
          <span className="pointer-events-none absolute top-[7px] right-1 border-y-4 border-l-4 border-y-transparent border-l-[#69737a]" />
        </div>
        <span className="ml-3 h-4 border-l border-dotted border-[#69737a]" />
        <Icon className="ml-[15px] size-[14px] text-[#a1abb0]" box="0 0 16 16">
          <path d="M1 5h3l4-4v14l-4-4H1z" />
          <path d="M11 4l4 4-4 4z" {...solid} />
        </Icon>
        <h2 className="ml-1 text-[14px]">通道机架</h2>
        <span className="ml-[64px] size-[17px] rounded-full border-2 border-[#3b444a] border-b-[#8b5549] bg-[#50595f]" />
        <span className="ml-[6px] flex h-[21px] w-9 items-center justify-center rounded border border-[#3b444a]">
          <span className="h-px w-3 bg-[#69737a]" />
        </span>
        <Icon className="ml-[12px] size-4" box="0 0 16 16">
          <path d="M2 14V9M5 14V5M8 14v-4M11 14V3M14 14V8" strokeWidth="2" />
        </Icon>
        <Icon className="ml-[7px] size-4 text-[#b08f3e]" box="0 0 16 16">
          <path d="M3 3v10M8 3v10M13 3v10" strokeWidth="4" />
          <path d="M1 6h4M6 9h4M11 6h4" stroke="#4a4334" />
        </Icon>
        <Icon className="ml-2 size-[14px]" box="0 0 14 14">
          <path d="M3 3l8 8M11 3l-8 8" />
        </Icon>
      </div>
      <div className="flex min-h-0 flex-1 border border-[#3a4349] bg-[#5f696f]">
        <ul className="min-h-0 flex-1 overflow-hidden pt-4">
          {channels.map((channel, i) => (
            <ChannelRow key={i} channel={channel} turn={channel.name === "Flute L" ? 195 : channel.name === "Flute R" ? 165 : 0} />
          ))}
        </ul>
        <div className="flex w-5 flex-col items-center justify-between py-1 text-[#343d43]">
          <div className="flex flex-col items-center gap-1">
            <Icon className="size-3" box="0 0 12 12">
              <path d="M3 8l3-3 3 3" />
            </Icon>
            <span className="h-[22px] w-1 rounded bg-[#343d43]" />
          </div>
          <Icon className="size-3" box="0 0 12 12">
            <path d="M3 4l3 3 3-3" />
          </Icon>
        </div>
      </div>
      <div className="flex h-[29px] shrink-0 items-center">
        <button type="button" aria-label="Add channel" className="ml-[130px] w-4 text-center text-lg leading-4 font-bold text-[#dfe5e8]">
          +
        </button>
        <div className="ml-10 flex flex-1 flex-col justify-between self-stretch">
          <span className="mr-[18px] ml-2 h-2 bg-[#363f45]" />
          <div className="mb-1 flex items-center text-[#262e33]">
            <span className="size-[6px] rotate-45 border-b border-l border-[#262e33]" />
            <span className="ml-1 h-[3px] w-[22px] bg-[#262e33]" />
            <span className="mr-3 ml-auto size-[6px] rotate-45 border-t border-r border-[#262e33]" />
          </div>
        </div>
      </div>
    </section>
  );
}

function pickerPath(n: number) {
  if ([7, 8, 9, 11, 12, 21, 24].includes(n)) return "M0 5h33v1H0zM0 17h33v1H0zM33 24h33v1H33zM66 6h33v1H66zM66 13h33v1H66zM100 3h33v1h-33zM100 12h33v1h-33zM100 20h33v1h-33z";
  if ([10, 13].includes(n)) return "M66 1h34v2H66zM100 16h33v2h-33zM33 23h33v2H33z";
  if ([22, 25].includes(n)) return "M66 1h9v1H66zM100 13h8v1h-8zM125 13h8v1h-8zM58 18h8v1h-8zM91 23h8v1h-8z";
  if ([1, 66].includes(n)) return "M48 13h133v1H48zM0 23h60v1H0zM60 18h70v1H60zM70 8h9v1h-9zM84 10h12v1H84zM100 16h30v1h-30z";
  if ([3, 4, 5, 6, 23].includes(n)) return "M0 21h16v1H0zM50 5h8v1h-8zM50 16h8v1h-8zM66 10h9v1h-9zM66 16h9v1h-9zM79 10h8v1h-8zM91 10h8v1h-8zM79 16h8v1h-8zM100 15h8v1h-8zM100 22h8v1h-8zM116 10h9v1h-9zM116 22h9v1h-9z";
  return "M66 8h4v1h-4zM79 5h2v1h-2zM84 11h3v1h-3zM100 12h5v1h-5zM109 4h3v1h-3zM113 20h4v1h-4zM119 18h4v1h-4zM125 17h4v1h-4zM50 20h4v1h-4zM92 24h2v1h-2zM16 24h2v1h-2z";
}

function Picker() {
  return (
    <aside className="flex w-[166px] shrink-0 flex-col pl-[5px]">
      <div className="flex h-[39px] shrink-0 items-center gap-[28px] pt-3 pl-4 text-[#5f686e]">
        <PianoGlyph className="size-[15px] text-[#e6ecee]" />
        <WaveGlyph className="h-[14px] w-5" />
        <CurveGlyph className="h-[14px] w-5" />
      </div>
      <div className="mr-[5px] flex min-h-0 flex-1 border border-[#242c31] bg-[#333d44]">
        <ul className="flex min-h-0 flex-1 flex-col gap-[5px] overflow-hidden pt-1 pl-1">
          {pickerItems.map((n) => (
            <li key={n} className="relative h-[26px] w-[133px] shrink-0 bg-linear-to-b from-[#505a60] to-[#434d53]">
              <svg viewBox="0 0 133 26" className="absolute inset-0 size-full" fill="#5d686e" aria-hidden="true">
                <path d={pickerPath(n)} />
              </svg>
              <button type="button" className="relative flex size-full items-center gap-[3px] pl-[2px] text-[13px] text-[#d5dcdf]">
                <PatternGlyph />
                样式 {n}
              </button>
              {(n === 7 || n === 24) && <span className="absolute top-0 right-[-1px] h-full w-1 bg-[#a9bac6]" />}
              {n === 19 && <span className="absolute top-2 left-[-2px] border-y-[5px] border-l-8 border-y-transparent border-l-[#e8304e]" />}
            </li>
          ))}
        </ul>
        <div className="w-[15px] border-l border-[#242c31] bg-[#3a444a]">
          <div className="flex h-[14px] items-center justify-center border border-[#6c767b] bg-[#545e64]">
            <span className="h-1 w-px bg-[#20282c]" />
          </div>
        </div>
      </div>
      <div className="flex h-[26px] shrink-0 items-center pl-[63px]">
        <button type="button" aria-label="Add pattern" className="w-4 text-center text-lg leading-4 font-bold text-[#dfe5e8]">
          +
        </button>
      </div>
    </aside>
  );
}

function ClipIconView({ icon }: { icon: ClipIcon }) {
  if (icon === "pattern") return <PatternGlyph />;
  if (icon === "cross") {
    return (
      <Icon className="h-[10px] w-2" box="0 0 8 10">
        <path d="M1 1l6 8M7 1L1 9" strokeWidth="1" />
      </Icon>
    );
  }
  if (icon === "curve") {
    return (
      <Icon className="h-[10px] w-[9px]" box="0 0 9 10">
        <circle cx="2" cy="8" r="1" strokeWidth="1" />
        <circle cx="7" cy="2" r="1" strokeWidth="1" />
        <path d="M3 7l3-4" strokeWidth="1" />
      </Icon>
    );
  }
  return (
    <Icon className="h-[10px] w-2" box="0 0 8 10">
      <path d="M1 2v6M1 5h3" strokeWidth="1" />
      <path d="M4 2l4 3-4 3z" {...solid} />
    </Icon>
  );
}

function ClipBody({ body, tone, len }: { body: string; tone: Tone; len: number }) {
  const width = Math.max(Math.round(len * BAR_UNITS), 2);

  if (body === "sweep") {
    // Volume automation: a slow rise to bar 13, a drop at 37, then the same rise again.
    return (
      <svg viewBox="0 0 74 20" preserveAspectRatio="none" className="size-full" aria-hidden="true">
        <path d="M0 13L6 11 9 7 12 2H36V13L43 11 46 7 48 2H74V20H0z" fill="#84466030" />
        <path d="M0 13L6 11 9 7 12 2H36V13L43 11 46 7 48 2H74" fill="none" stroke="#c9b0bd" vectorEffect="non-scaling-stroke" />
      </svg>
    );
  }

  if (body === "panline") {
    return (
      <svg viewBox="0 0 208 20" preserveAspectRatio="none" className="size-full" aria-hidden="true">
        <path d="M0 19H97L99 13H101L104 19H196L202 12 208 9" fill="none" stroke="#d5dfc0" vectorEffect="non-scaling-stroke" />
      </svg>
    );
  }

  return (
    <svg viewBox={`0 0 ${width} 20`} preserveAspectRatio="none" className="size-full" aria-hidden="true">
      {cells[body] ? (
        <path d={notesPath(cells[body], width)} fill={toneInk[tone]} />
      ) : (
        <path d={wavePath(waves[body], width)} stroke={toneInk[tone]} strokeWidth="1" fill="none" />
      )}
    </svg>
  );
}

function ClipView({ clip }: { clip: Clip }) {
  const style = { left: `${((clip.at - 1) / BARS) * 100}%`, width: `${(clip.len / BARS) * 100}%` };
  const overlay = clip.tone === "none" || clip.icon === "curve";

  if (clip.tall) {
    return (
      <div className="absolute inset-y-px flex items-center border-r border-[#2a3237] bg-[#4a5156] pl-[2px]" style={style}>
        <PatternGlyph />
      </div>
    );
  }

  return (
    <div className="absolute inset-y-px flex flex-col" style={style}>
      <div
        className={clsx(
          "flex h-[14px] shrink-0 items-center gap-[2px] overflow-hidden font-[family-name:Lato,'Noto_Sans_CJK_SC',sans-serif] text-[11px] leading-[14px] whitespace-nowrap",
          toneHeader[clip.tone],
          clip.tone !== "none" && clip.tone !== "stripeGreen" && "border-r border-[#2a3237]",
          clip.icon && "pl-[2px]",
        )}
      >
        {clip.icon && <ClipIconView icon={clip.icon} />}
        {clip.label}
      </div>
      <div className={clsx("min-h-0 flex-1", !overlay && "bg-[#23303999]")}>
        {clip.body && <ClipBody body={clip.body} tone={clip.tone} len={clip.len} />}
      </div>
    </div>
  );
}

function TrackHeaders() {
  return (
    <ul className="w-[101px] shrink-0 border-l border-[#20282c]">
      {lanes.map((_, i) => (
        <li
          key={i}
          className={clsx(
            "flex justify-between rounded-r-lg border-b border-[#3c454a] bg-linear-to-b from-[#535c62] to-[#475056] pr-[6px] pl-[2px]",
            i === 8 ? "h-8 items-center" : "h-9",
          )}
        >
          <div className="flex flex-col justify-between">
            <span className="text-[13px] leading-4 text-[#cbd3d7]">Track {i + 1}</span>
            {i !== 8 && <span className="pl-3 text-[10px] leading-[11px] text-[#333c42]">...</span>}
          </div>
          <div className={clsx("flex", i === 8 ? "items-center" : "items-end pb-1")}>
            <Led />
          </div>
        </li>
      ))}
    </ul>
  );
}

function Timeline() {
  const bars = Array.from({ length: Math.floor(BARS) + 1 }, (_, i) => i);
  return (
    <div className="relative min-w-0 flex-1 overflow-hidden bg-[#2d3d47]">
      <svg className="absolute inset-0 size-full" aria-hidden="true">
        {bars.filter((i) => i % 8 === 0).map((i) => (
          <rect key={`b${i}`} x={`${(i / BARS) * 100}%`} y="0" width={`${(4 / BARS) * 100}%`} height="100%" fill="#33444e" />
        ))}
        {bars.map((i) => (
          <rect key={i} x={`${(i / BARS) * 100}%`} y="0" width="1" height="100%" fill={i % 4 ? "#1b2b34" : "#12212a"} />
        ))}
      </svg>
      {lanes.map((clips, i) => (
        <div key={i} className={clsx("relative border-b border-[#14232c]", i === 8 ? "h-8" : "h-9")}>
          {clips.map((clip, j) => (
            <ClipView key={j} clip={clip} />
          ))}
        </div>
      ))}
      <div className="absolute inset-y-0 left-[42.6%] w-4 border-r-2 border-[#a8ee3c] bg-linear-to-r from-transparent from-10% to-[#4f860f]" />
    </div>
  );
}

function Overview() {
  return (
    <div className="flex h-5">
      <button type="button" aria-label="Scroll left" className="flex w-5 items-center justify-center border border-[#2b3439] bg-[#525c62] text-[#20282c]">
        <Icon className="size-3" box="0 0 12 12"><path d="M8 2L4 6l4 4" /></Icon>
      </button>
      <svg viewBox="0 0 1005 20" preserveAspectRatio="none" className="h-5 min-w-0 flex-1 bg-[#53636c]" aria-hidden="true">
        <path d="M0 0h878v18H0z" fill="#67747b" />
        <path d="M0 4h140M300 3h130M480 4h80M620 3h120M800 4h78" stroke="#8f7f8d" />
        <path d="M100 2h140M225 6h160M560 6h130M720 9h130M250 10h100" stroke="#8a8f66" />
        <path d="M0 9h50M50 7h330M90 11h250M480 11h400M600 7h250" stroke="#7f8f93" />
        <path d="M0 14h878" stroke="#86799c" strokeWidth="2" />
        <path d="M0 17h878" stroke="#98a3ab" strokeWidth="2" />
        <path d="M442 1v18" stroke="#d9f23c" strokeWidth="2" />
      </svg>
      <div className="w-[77px] shrink-0 bg-[#3b454c]" />
      <button type="button" aria-label="Scroll right" className="flex w-5 items-center justify-center border border-[#2b3439] bg-[#525c62] text-[#20282c]">
        <Icon className="size-3" box="0 0 12 12"><path d="M4 2l4 4-4 4" /></Icon>
      </button>
    </div>
  );
}

function Ruler() {
  return (
    <div className="relative flex h-5 overflow-hidden border-y border-[#16222a] bg-[#22313a] text-[11px] leading-[18px] text-[#a4b0b6]">
      {Array.from({ length: 22 }, (_, i) => (
        <span key={i} className="shrink-0 overflow-hidden pl-px" style={{ width: `${(4 / BARS) * 100}%` }}>
          {i * 4 + 1}
        </span>
      ))}
      <span className="absolute top-0 left-[25.4%] border-x-[6px] border-t-[6px] border-x-transparent border-t-[#46545c]" />
      <span className="absolute top-px left-[43.3%] border-x-[7px] border-t-[11px] border-x-transparent border-t-[#9be02f]" />
    </div>
  );
}

const tools = [
  { name: "Draw", d: "M3 3l3-1 8 9-1 3-3 0-8-8zM5 5l7 7", color: "text-[#cfd7db]" },
  { name: "Paint", d: "M1 3l3-1 2 2 2-2 1 5 4 3 2 4-3-1-1 1-4-3-5 0 2-4z", color: "text-[#6cb4ee]" },
  { name: "Delete", d: "M8 2a6 6 0 1 1 0 12 6 6 0 0 1 0-12M4 12l8-8", color: "text-[#cfd7db]" },
  { name: "Mute", d: "M1 6h2l5-4v12l-5-4H1zM10 5l5 6M15 5l-5 6", color: "text-[#cfd7db]" },
  { name: "Slip", d: "M1 8l5-4v8zM15 8l-5-4v8zM5 8h6", color: "text-[#cfd7db]" },
  { name: "Slice", d: "M2 2l7 9V3h5v10H9", color: "text-[#cfd7db]" },
  { name: "Select", d: "M2 6V2h4M10 2h4v4M14 10v4h-4M6 14H2v-4", color: "text-[#cfd7db]" },
  { name: "Zoom", d: "M7 2a5 5 0 1 1 0 10A5 5 0 0 1 7 2M11 11l4 4", color: "text-[#cfd7db]" },
  { name: "Playback", d: "M1 6h2l5-4v12l-5-4H1zM11 4v8M14 4v8", color: "text-[#cfd7db]" },
];

const filledTools = ["Paint", "Mute", "Slip", "Slice", "Playback"];

function Playlist() {
  return (
    <section className="flex min-w-0 flex-1 flex-col bg-[#414a50] pr-[5px]">
      <div className="flex h-7 shrink-0 items-center text-[#cfd7db]">
        <span className="ml-[13px] border-y-4 border-l-4 border-y-transparent border-l-[#cfd7db]" />
        <Icon className="ml-[11px] size-[14px] text-[#6ee0a0]" box="0 0 14 14">
          <path d="M3 13V6a4 4 0 0 1 8 0v7" strokeWidth="4" />
        </Icon>
        <div className="ml-[19px] flex gap-[5px]">
          {tools.map((tool) => (
            <button key={tool.name} type="button" aria-label={tool.name} className={tool.color}>
              <Icon className="size-4" box="0 0 16 16">
                <path d={tool.d} fill={filledTools.includes(tool.name) ? "currentColor" : "none"} />
              </Icon>
            </button>
          ))}
        </div>
        <Icon className="ml-[17px] size-[15px] text-[#b4ec3a]" box="0 0 16 16">
          <path d="M1 5h3l4-4v14l-4-4H1z" />
          <path d="M11 4l4 4-4 4z" {...solid} />
        </Icon>
        <h2 className="ml-[6px] flex items-center text-sm">
          播放列表 - 编曲
          <span className="mx-[6px] border-y-4 border-l-4 border-y-transparent border-l-[#79848a]" />
          哈哈哈哈哈哈 GAIN_7_主控_2
          <span className="ml-[6px] border-y-4 border-l-4 border-y-transparent border-l-[#79848a]" />
        </h2>
        <div className="mr-[2px] ml-auto flex gap-[6px]">
          {["M3 5h7", "M2 4h10v8H2zM2 5h10", "M2 3l9 9M11 3l-9 9"].map((d) => (
            <button key={d} type="button" aria-label="Playlist window control">
              <Icon className="size-[14px]" box="0 0 14 14">
                <path d={d} strokeWidth="2" />
              </Icon>
            </button>
          ))}
        </div>
      </div>

      <div className="flex min-h-0 flex-1">
        <Picker />
        <div className="flex min-w-0 flex-1 flex-col pb-[7px]">
          <div className="flex h-10 shrink-0">
            <div className="flex w-[112px] shrink-0">
              <div className="relative flex w-[31px] items-end justify-center">
                <svg viewBox="0 0 31 40" className="absolute inset-0 size-full" aria-hidden="true">
                  <path d="M1 40L9 4q2-4 5-4h17v40z" fill="#525c62" stroke="#22292e" />
                </svg>
                <button type="button" aria-label="Add track" className="relative pb-[2px] pl-1 text-lg leading-5 font-bold text-[#e3e9ec]">
                  +
                </button>
              </div>
              <div className="grid flex-1 grid-cols-3 place-items-center border-r border-[#22292e] bg-[#525c62] text-[#727d83]">
                <WaveGlyph className="h-[14px] w-5 text-[#e6ecee]" />
                <CurveGlyph className="h-[14px] w-5" />
                <PianoGlyph className="size-[13px]" />
                <Icon className="size-3" box="0 0 12 12"><path d="M2 2l8 8M10 2l-8 8" strokeWidth="1" /></Icon>
                <Icon className="size-3" box="0 0 12 12"><path d="M2 2v8M4 9l6-7" strokeWidth="1" /></Icon>
                <Icon className="size-3" box="0 0 12 12"><path d="M0 6h12M3 3L0 6l3 3M9 3l3 3-3 3" strokeWidth="1" /></Icon>
              </div>
            </div>
            <div className="min-w-0 flex-1">
              <Overview />
              <Ruler />
            </div>
            <div className="flex w-5 shrink-0 flex-col">
              <span className="flex h-5 items-center justify-center border border-[#2b3439] bg-[#4c565c]">
                <span className="size-1 rounded-full bg-[#1d2428]" />
              </span>
              <button type="button" aria-label="Scroll up" className="flex h-5 items-center justify-center border border-[#2b3439] bg-[#4c565c] text-[#1d2428]">
                <Icon className="size-3" box="0 0 12 12"><path d="M2 8l4-4 4 4" /></Icon>
              </button>
            </div>
          </div>
          <div className="flex min-h-0 flex-1 overflow-hidden">
            <TrackHeaders />
            <div className="w-[11px] shrink-0 bg-[#28363f] pr-px">
              {lanes.map((_, i) => (
                <div key={i} className={clsx("border-b border-[#14232c]", i === 8 ? "h-8" : "h-9", litTracks.includes(i + 1) && "bg-[#a3b6c3]")} />
              ))}
            </div>
            <Timeline />
            <div className="flex w-5 shrink-0 flex-col justify-between bg-[#393f47]">
              <span className="h-8 border border-[#6a747a] bg-[#545e66]" />
              <button type="button" aria-label="Scroll down" className="flex h-5 items-center justify-center border border-[#7a848a] bg-[#545e66] text-[#1d2428]">
                <Icon className="size-3" box="0 0 12 12"><path d="M2 4l4 4 4-4" /></Icon>
              </button>
            </div>
          </div>
        </div>
      </div>
    </section>
  );
}

export default function App() {
  return (
    <div className="relative flex h-screen w-full flex-col overflow-hidden bg-[#5b656c] font-[family-name:Roboto,'Noto_Sans_CJK_SC',sans-serif]">
      <TopBar />
      <main className="flex min-h-0 flex-1 border-b border-[#353d43] pr-2">
        <ChannelRack />
        <Playlist />
      </main>
      <a href="#site" className="absolute right-[26px] bottom-[22px] font-[family-name:Lato,sans-serif] text-[24px] leading-8 font-bold text-white">
        www.flpdown.com
      </a>
    </div>
  );
}
